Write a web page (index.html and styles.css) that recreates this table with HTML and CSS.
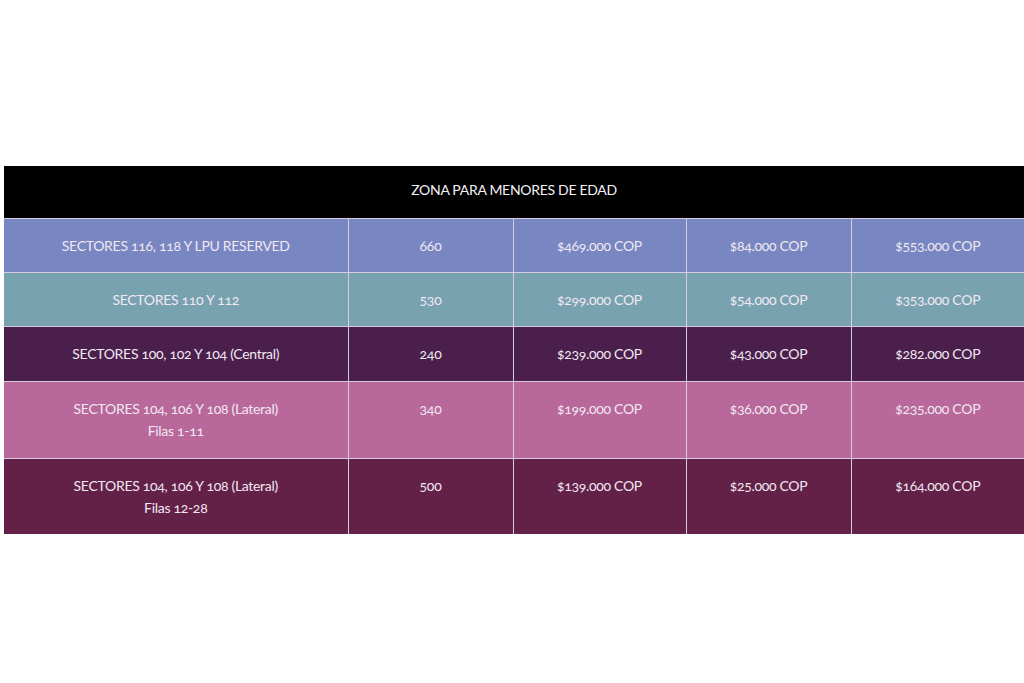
FILE: index.html
```
<!DOCTYPE html>
<html lang="es">
<head>
<meta charset="utf-8">
<link rel="stylesheet" href="styles.css">
</head>
<body>
<table class="prices">
  <colgroup>
    <col class="c1"><col class="c2"><col class="c3"><col class="c4"><col class="c5">
  </colgroup>
  <thead>
    <tr class="head"><th colspan="5">ZONA PARA MENORES DE EDAD</th></tr>
  </thead>
  <tbody>
    <tr class="r1"><td>SECTORES 116, 118 Y LPU RESERVED</td><td>660</td><td>$469.000 COP</td><td>$84.000 COP</td><td>$553.000 COP</td></tr>
    <tr class="r2"><td>SECTORES 110 Y 112</td><td>530</td><td>$299.000 COP</td><td>$54.000 COP</td><td>$353.000 COP</td></tr>
    <tr class="r3"><td>SECTORES 100, 102 Y 104 (Central)</td><td>240</td><td>$239.000 COP</td><td>$43.000 COP</td><td>$282.000 COP</td></tr>
    <tr class="r4"><td>SECTORES 104, 106 Y 108 (Lateral)<br>Filas 1-11</td><td>340</td><td>$199.000 COP</td><td>$36.000 COP</td><td>$235.000 COP</td></tr>
    <tr class="r5"><td>SECTORES 104, 106 Y 108 (Lateral)<br>Filas 12-28</td><td>500</td><td>$139.000 COP</td><td>$25.000 COP</td><td>$164.000 COP</td></tr>
  </tbody>
</table>
</body>
</html>
```
FILE: styles.css
```
html, body {
  margin: 0;
  padding: 0;
  background: #ffffff;
}
body {
  padding: 166px 0 0 4px;
  font-family: Lato, "Open Sans", sans-serif;
}
.prices {
  width: 1020px;
  border-collapse: collapse;
  table-layout: fixed;
  color: #f1e8f1;
  font-size: 14px;
  letter-spacing: -0.3px;
  font-variant-numeric: oldstyle-nums;
}
.c1 { width: 344px; }
.c2 { width: 165px; }
.c3 { width: 173px; }
.c4 { width: 165px; }
.c5 { width: 173px; }
.head th {
  background: #000000;
  height: 52px;
  padding: 0 0 4px;
  box-sizing: border-box;
  font-weight: normal;
  text-align: center;
  vertical-align: middle;
  color: #f4f0f4;
}
.prices td {
  border: 1px solid #d8cce0;
  padding: 16px 8px 15px;
  line-height: 22px;
  text-align: center;
  vertical-align: top;
}
.prices tr td:first-child { border-left: none; }
.prices tr td:last-child { border-right: none; }
.prices tbody tr:last-child td { border-bottom: none; }
.r1 td { background: #7886c2; }
.r2 td { background: #79a2b1; }
.r3 td { background: #4a1f4b; padding-bottom: 16px; }
.r4 td { background: #b8689b; padding-bottom: 16px; }
.r5 td { background: #632147; padding-bottom: 15px; }
```
